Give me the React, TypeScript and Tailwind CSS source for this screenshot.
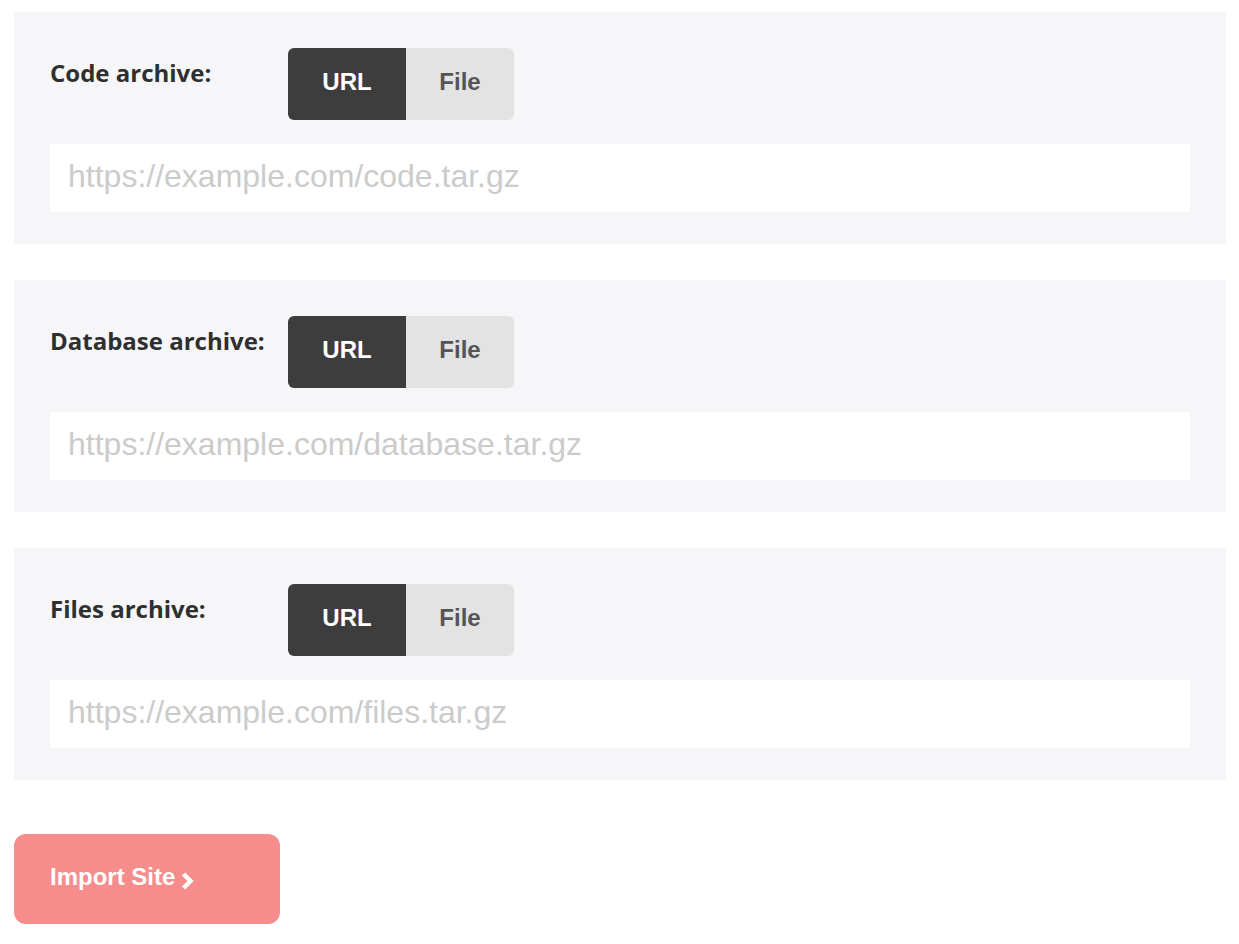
import React from "react";

const ARCHIVES = [
  { label: "Code archive:", placeholder: "https://example.com/code.tar.gz" },
  { label: "Database archive:", placeholder: "https://example.com/database.tar.gz" },
  { label: "Files archive:", placeholder: "https://example.com/files.tar.gz" },
];

function ArchiveField({ label, placeholder }: { label: string; placeholder: string }) {
  return (
    <div className="bg-[#f6f6f8] px-9 pt-9 pb-8">
      <div className="flex items-start">
        <div className="w-[238px] pt-[10px] text-[24px] leading-[30px] font-bold text-[#2f2f2f] font-['Open_Sans',sans-serif]">
          {label}
        </div>
        <div className="flex h-[72px] rounded-md overflow-hidden font-['Liberation_Sans',Arial,sans-serif] text-[24px] font-bold">
          <button className="w-[118px] pb-1 bg-[#3d3d3d] text-white">URL</button>
          <button className="w-[108px] pb-1 bg-[#e3e3e3] text-[#555555]">File</button>
        </div>
      </div>
      <input
        className="mt-6 block w-full h-[68px] bg-white px-[18px] pb-1 text-[32px] font-['Liberation_Sans',Arial,sans-serif] text-[#333] placeholder:text-[#cbcbcb] outline-none"
        placeholder={placeholder}
      />
    </div>
  );
}

export default function App() {
  return (
    <div className="min-h-screen bg-white px-[14px] pt-3">
      <div className="w-[1212px] flex flex-col gap-9">
        {ARCHIVES.map((a) => (
          <ArchiveField key={a.label} {...a} />
        ))}
      </div>
      <button className="mt-[54px] flex items-center w-[266px] h-[90px] pb-1 rounded-xl bg-[#f68c8b] pl-9 text-white text-[24px] font-bold font-['Liberation_Sans',Arial,sans-serif]">
        Import Site
        <svg className="ml-[5px] mt-2 w-[16px] h-[20px]" viewBox="0 0 16 20" fill="none" stroke="currentColor" strokeWidth={4.5}>
          <path d="M3.5 3l7 7-7 7" />
        </svg>
      </button>
    </div>
  );
}
